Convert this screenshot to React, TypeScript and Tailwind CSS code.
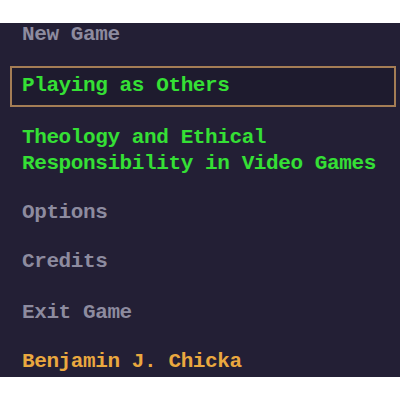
import React from "react";

const font = { fontFamily: '"Liberation Mono", "DejaVu Sans Mono", monospace' };

export default function App() {
  return (
    <div className="w-[400px] h-[400px] bg-white overflow-hidden">
      <div className="mt-[23px] h-[354px] bg-[#231f35] flex flex-col overflow-hidden font-bold text-[21px] leading-[26px] tracking-[-0.4px]" style={font}>
        <div className="-mt-[1px] pl-[22px] text-[#8d8b9f]">New Game</div>
        <div className="mt-[18px] ml-[10px] mr-[4px] border-2 border-[#a47d55] bg-[#1e1b2e] pl-[10px] pt-[5px] pb-[6px] text-[#35e035]">
          Playing as Others
        </div>
        <div className="mt-[18px] pl-[22px] text-[#35e035]">
          <div>Theology and Ethical</div>
          <div>Responsibility in Video Games</div>
        </div>
        <div className="mt-[23px] pl-[22px] text-[#8d8b9f]">Options</div>
        <div className="mt-[23px] pl-[22px] text-[#8d8b9f]">Credits</div>
        <div className="mt-[25px] pl-[22px] text-[#8d8b9f]">Exit Game</div>
        <div className="mt-[23px] pl-[22px] text-[#eaa83f]">Benjamin J. Chicka</div>
      </div>
    </div>
  );
}
